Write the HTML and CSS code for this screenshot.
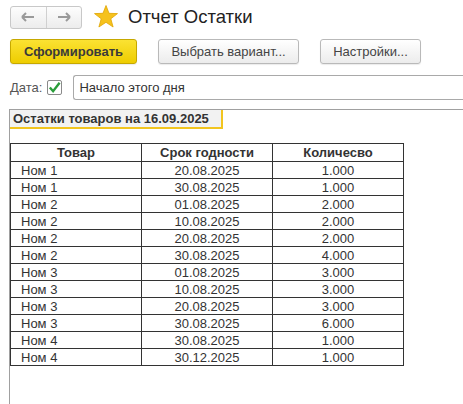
FILE: index.html
```html
<!DOCTYPE html>
<html lang="ru">
<head>
<meta charset="utf-8">
<link rel="stylesheet" href="styles.css">
</head>
<body>
<div class="page">
  <div class="titlebar">
    <div class="nav">
      <span class="navbtn"><svg width="14" height="10" viewBox="0 0 14 10"><path d="M1 5h12M1 5l4-4M1 5l4 4" stroke="#9a9a9a" stroke-width="2" fill="none"/></svg></span>
      <span class="navbtn"><svg width="14" height="10" viewBox="0 0 14 10"><path d="M13 5H1M13 5L9 1M13 5L9 9" stroke="#9a9a9a" stroke-width="2" fill="none"/></svg></span>
    </div>
    <svg class="star" width="24" height="23" viewBox="0 0 24 23"><polygon points="12,0.5 15,8.3 23.5,8.6 16.8,13.8 19.1,22 12,17.3 4.9,22 7.2,13.8 0.5,8.6 9,8.3" fill="#f6c21c" stroke="#e0a400" stroke-width="0.8"/></svg>
    <h1 class="title">Отчет Остатки</h1>
  </div>
  <div class="toolbar">
    <button class="btn primary">Сформировать</button>
    <button class="btn variant">Выбрать вариант...</button>
    <button class="btn settings">Настройки...</button>
  </div>
  <div class="daterow">
    <span class="label">Дата:</span>
    <span class="checkbox"><svg width="14" height="13" viewBox="0 0 14 13"><path d="M2 6.5l3.5 4L12.5 1.5" stroke="#2a9d3a" stroke-width="2.6" fill="none"/></svg></span>
    <div class="input">Начало этого дня</div>
  </div>
  <div class="sheet">
    <div class="caption">Остатки товаров на 16.09.2025</div>
    <table class="report">
      <thead>
        <tr><th>Товар</th><th>Срок годности</th><th>Количесво</th></tr>
      </thead>
      <tbody>
        <tr><td class="l">Ном 1</td><td>20.08.2025</td><td>1.000</td></tr>
        <tr><td class="l">Ном 1</td><td>30.08.2025</td><td>1.000</td></tr>
        <tr><td class="l">Ном 2</td><td>01.08.2025</td><td>2.000</td></tr>
        <tr><td class="l">Ном 2</td><td>10.08.2025</td><td>2.000</td></tr>
        <tr><td class="l">Ном 2</td><td>20.08.2025</td><td>2.000</td></tr>
        <tr><td class="l">Ном 2</td><td>30.08.2025</td><td>4.000</td></tr>
        <tr><td class="l">Ном 3</td><td>01.08.2025</td><td>3.000</td></tr>
        <tr><td class="l">Ном 3</td><td>10.08.2025</td><td>3.000</td></tr>
        <tr><td class="l">Ном 3</td><td>20.08.2025</td><td>3.000</td></tr>
        <tr><td class="l">Ном 3</td><td>30.08.2025</td><td>6.000</td></tr>
        <tr><td class="l">Ном 4</td><td>30.08.2025</td><td>1.000</td></tr>
        <tr><td class="l">Ном 4</td><td>30.12.2025</td><td>1.000</td></tr>
      </tbody>
    </table>
  </div>
</div>
</body>
</html>
```
FILE: styles.css
```css
* { box-sizing: border-box; }
html, body { margin: 0; padding: 0; background: #fff; }
body {
  font-family: "Liberation Sans", Arial, sans-serif;
  color: #333;
  width: 463px;
  height: 404px;
  overflow: hidden;
}
.page { padding: 5px 0 0 10px; }
.titlebar { display: flex; align-items: center; height: 24px; }
.nav {
  display: flex;
  width: 72px;
  height: 23px;
  border: 1px solid #c8c8c8;
  border-radius: 3px;
  background: linear-gradient(#fdfdfd, #ececec);
}
.navbtn {
  flex: 1;
  display: flex;
  align-items: center;
  justify-content: center;
}
.navbtn + .navbtn { border-left: 1px solid #d0d0d0; }
.star { margin-left: 12px; margin-top: -1px; }
.title {
  margin: 0 0 0 10px;
  font-size: 18.5px;
  font-weight: normal;
  color: #222;
  line-height: 22px;
}
.toolbar { display: flex; margin-top: 10px; height: 25px; }
.btn {
  font-family: "Liberation Sans", Arial, sans-serif;
  font-size: 13px;
  height: 25px;
  padding: 0;
  border: 1px solid #b9b9b9;
  border-radius: 3px;
  background: linear-gradient(#ffffff, #ececec);
  color: #444;
  box-shadow: 0 1px 1px rgba(0,0,0,0.08);
}
.primary {
  width: 127px;
  font-weight: bold;
  color: #3a3a3a;
  border-color: #c6a800;
  background: linear-gradient(#fbe233, #eecd00);
}
.variant { width: 141px; margin-left: 21px; }
.settings { width: 101px; margin-left: 21px; }
.daterow { display: flex; align-items: center; margin-top: 11px; height: 25px; }
.label { font-size: 13px; color: #555; }
.checkbox {
  width: 15px;
  height: 15px;
  margin-left: 5px;
  border: 1px solid #8a8a8a;
  border-radius: 2px;
  display: flex;
  align-items: center;
  justify-content: center;
  background: #fff;
}
.input {
  margin-left: 11px;
  flex: 1;
  height: 25px;
  border: 1px solid #a9a9a9;
  border-right: none;
  border-radius: 3px 0 0 3px;
  font-size: 13px;
  color: #333;
  padding: 4px 0 0 5px;
}
.sheet {
  margin: 9px 0 0 -1px;
  border-top: 1px solid #a0a0a0;
  border-left: 1px solid #a0a0a0;
  height: 300px;
}
.caption {
  display: inline-block;
  width: 213px;
  height: 19px;
  background: #f2f2f2;
  border-right: 2px solid #f2c51f;
  border-bottom: 2px solid #f2c51f;
  font-weight: bold;
  font-size: 13px;
  line-height: 15px;
  color: #333;
  padding: 1px 0 0 3px;
  white-space: nowrap;
  vertical-align: top;
}
.report {
  border-collapse: collapse;
  margin-top: 14px;
  font-size: 13px;
  color: #333;
}
.report th, .report td {
  width: 131px;
  height: 17px;
  padding: 0;
  border: 1px solid #333;
  text-align: center;
  line-height: 15px;
}
.report th { font-weight: bold; height: 18px; }
.report td.l { text-align: left; padding-left: 10px; }
```
